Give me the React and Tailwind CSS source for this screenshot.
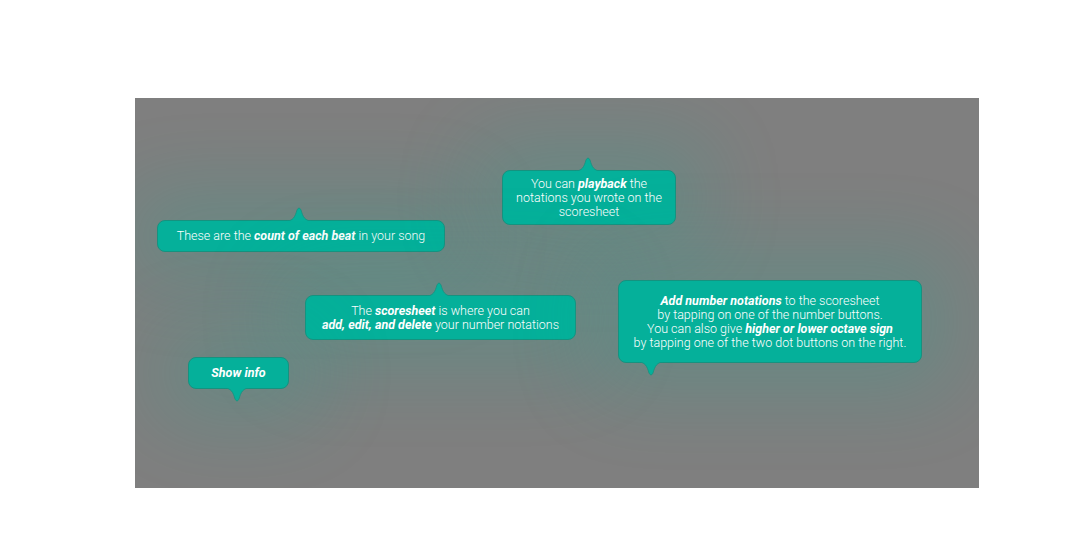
const TEAL = 'bg-[#05b09a]';

const Arrow = ({ down }) => (
  <svg
    width="26"
    height="14"
    viewBox="0 0 26 14"
    className={down ? 'block rotate-180' : 'block'}
  >
    <path
      d="M0 14 C7 14 9 10 11 3 Q13 -1 15 3 C17 10 19 14 26 14 Z"
      fill="#05b09a"
    />
    <path
      d="M0 14 C7 14 9 10 11 3 Q13 -1 15 3 C17 10 19 14 26 14"
      fill="none"
      stroke="#16927f"
      strokeWidth="0.8"
    />
  </svg>
);

const Tip = ({ className, arrowLeft, down, children, boxClass }) => (
  <div className={`absolute flex flex-col ${className}`}>
    {!down && (
      <div className="relative z-10 -mb-px" style={{ marginLeft: arrowLeft }}>
        <Arrow />
      </div>
    )}
    <div
      className={`${TEAL} border border-[#16927f] rounded-lg text-white text-[12.5px] leading-[14px] text-center font-light shadow-[0_0_80px_30px_rgba(15,174,152,0.2)] ${boxClass}`}
    >
      {children}
    </div>
    {down && (
      <div className="relative z-10 -mt-px" style={{ marginLeft: arrowLeft }}>
        <Arrow down />
      </div>
    )}
  </div>
);

const B = ({ children }) => <b className="font-bold italic">{children}</b>;

export default function App() {
  return (
    <div className="w-[1077px] h-[558px] bg-white pt-[98px] pl-[135px]" style={{ fontFamily: 'Roboto, "Noto Sans", sans-serif' }}>
      <div className="relative w-[844px] h-[390px] bg-[#7f7f7f] overflow-hidden">
        <Tip className="left-[22px] top-[109px]" arrowLeft="129px" boxClass="w-[288px] h-[32px] flex items-center justify-center">
          <span>
            These are the <B>count of each beat</B> in your song
          </span>
        </Tip>

        <Tip className="left-[367px] top-[59px]" arrowLeft="73px" boxClass="w-[174px] h-[55px] flex items-center justify-center px-3">
          <span>
            You can <B>playback</B> the
            <br />
            notations you wrote on the
            <br />
            scoresheet
          </span>
        </Tip>

        <Tip className="left-[170px] top-[184px]" arrowLeft="121px" boxClass="w-[271px] h-[45px] flex items-center justify-center">
          <span>
            The <B>scoresheet</B> is where you can
            <br />
            <B>add, edit, and delete</B> your number notations
          </span>
        </Tip>

        <Tip className="left-[483px] top-[182px]" arrowLeft="20px" down boxClass="w-[304px] h-[83px] flex items-center justify-center">
          <span>
            <B>Add number notations</B> to the scoresheet
            <br />
            by tapping on one of the number buttons.
            <br />
            You can also give <B>higher or lower octave sign</B>
            <br />
            by tapping one of the two dot buttons on the right.
          </span>
        </Tip>

        <Tip className="left-[53px] top-[259px]" arrowLeft="36px" down boxClass="w-[101px] h-[32px] flex items-center justify-center">
          <B>Show info</B>
        </Tip>
      </div>
    </div>
  );
}
